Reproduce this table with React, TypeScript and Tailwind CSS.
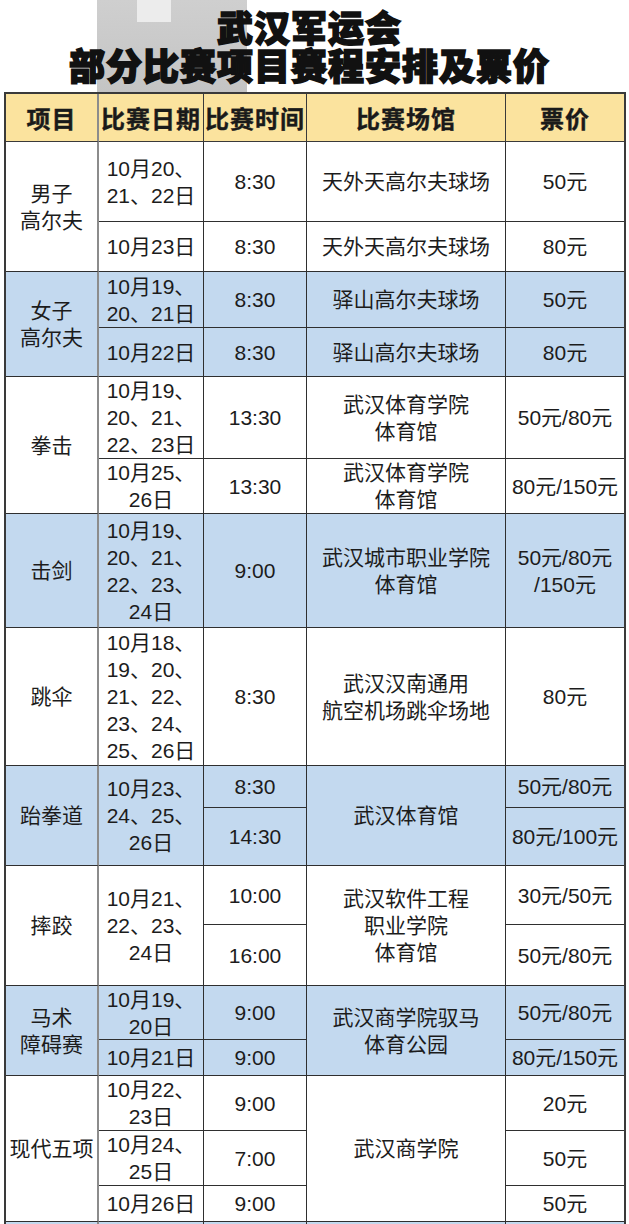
import React from 'react';

type Cell = {
  row: string;
  col: string;
  lines: string[];
  blue?: boolean;
  first?: boolean;
  last?: boolean;
};

const BLUE = 'bg-[#c3d9ef]';

// row index helpers: header is row 1, body rows start at 2
const cells: Cell[] = [
  // 男子高尔夫
  { row: 'row-[2/4]', col: 'col-[1]', lines: ['男子', '高尔夫'], first: true },
  { row: 'row-[2]', col: 'col-[2]', lines: ['10月20、', '21、22日'] },
  { row: 'row-[2]', col: 'col-[3]', lines: ['8:30'] },
  { row: 'row-[2]', col: 'col-[4]', lines: ['天外天高尔夫球场'] },
  { row: 'row-[2]', col: 'col-[5]', lines: ['50元'], last: true },
  { row: 'row-[3]', col: 'col-[2]', lines: ['10月23日'] },
  { row: 'row-[3]', col: 'col-[3]', lines: ['8:30'] },
  { row: 'row-[3]', col: 'col-[4]', lines: ['天外天高尔夫球场'] },
  { row: 'row-[3]', col: 'col-[5]', lines: ['80元'], last: true },

  // 女子高尔夫
  { row: 'row-[4/6]', col: 'col-[1]', lines: ['女子', '高尔夫'], first: true, blue: true },
  { row: 'row-[4]', col: 'col-[2]', lines: ['10月19、', '20、21日'], blue: true },
  { row: 'row-[4]', col: 'col-[3]', lines: ['8:30'], blue: true },
  { row: 'row-[4]', col: 'col-[4]', lines: ['驿山高尔夫球场'], blue: true },
  { row: 'row-[4]', col: 'col-[5]', lines: ['50元'], blue: true, last: true },
  { row: 'row-[5]', col: 'col-[2]', lines: ['10月22日'], blue: true },
  { row: 'row-[5]', col: 'col-[3]', lines: ['8:30'], blue: true },
  { row: 'row-[5]', col: 'col-[4]', lines: ['驿山高尔夫球场'], blue: true },
  { row: 'row-[5]', col: 'col-[5]', lines: ['80元'], blue: true, last: true },

  // 拳击
  { row: 'row-[6/8]', col: 'col-[1]', lines: ['拳击'], first: true },
  { row: 'row-[6]', col: 'col-[2]', lines: ['10月19、', '20、21、', '22、23日'] },
  { row: 'row-[6]', col: 'col-[3]', lines: ['13:30'] },
  { row: 'row-[6]', col: 'col-[4]', lines: ['武汉体育学院', '体育馆'] },
  { row: 'row-[6]', col: 'col-[5]', lines: ['50元/80元'], last: true },
  { row: 'row-[7]', col: 'col-[2]', lines: ['10月25、', '26日'] },
  { row: 'row-[7]', col: 'col-[3]', lines: ['13:30'] },
  { row: 'row-[7]', col: 'col-[4]', lines: ['武汉体育学院', '体育馆'] },
  { row: 'row-[7]', col: 'col-[5]', lines: ['80元/150元'], last: true },

  // 击剑
  { row: 'row-[8]', col: 'col-[1]', lines: ['击剑'], first: true, blue: true },
  { row: 'row-[8]', col: 'col-[2]', lines: ['10月19、', '20、21、', '22、23、', '24日'], blue: true },
  { row: 'row-[8]', col: 'col-[3]', lines: ['9:00'], blue: true },
  { row: 'row-[8]', col: 'col-[4]', lines: ['武汉城市职业学院', '体育馆'], blue: true },
  { row: 'row-[8]', col: 'col-[5]', lines: ['50元/80元', '/150元'], blue: true, last: true },

  // 跳伞
  { row: 'row-[9]', col: 'col-[1]', lines: ['跳伞'], first: true },
  { row: 'row-[9]', col: 'col-[2]', lines: ['10月18、', '19、20、', '21、22、', '23、24、', '25、26日'] },
  { row: 'row-[9]', col: 'col-[3]', lines: ['8:30'] },
  { row: 'row-[9]', col: 'col-[4]', lines: ['武汉汉南通用', '航空机场跳伞场地'] },
  { row: 'row-[9]', col: 'col-[5]', lines: ['80元'], last: true },

  // 跆拳道
  { row: 'row-[10/12]', col: 'col-[1]', lines: ['跆拳道'], first: true, blue: true },
  { row: 'row-[10/12]', col: 'col-[2]', lines: ['10月23、', '24、25、', '26日'], blue: true },
  { row: 'row-[10]', col: 'col-[3]', lines: ['8:30'], blue: true },
  { row: 'row-[11]', col: 'col-[3]', lines: ['14:30'], blue: true },
  { row: 'row-[10/12]', col: 'col-[4]', lines: ['武汉体育馆'], blue: true },
  { row: 'row-[10]', col: 'col-[5]', lines: ['50元/80元'], blue: true, last: true },
  { row: 'row-[11]', col: 'col-[5]', lines: ['80元/100元'], blue: true, last: true },

  // 摔跤
  { row: 'row-[12/14]', col: 'col-[1]', lines: ['摔跤'], first: true },
  { row: 'row-[12/14]', col: 'col-[2]', lines: ['10月21、', '22、23、', '24日'] },
  { row: 'row-[12]', col: 'col-[3]', lines: ['10:00'] },
  { row: 'row-[13]', col: 'col-[3]', lines: ['16:00'] },
  { row: 'row-[12/14]', col: 'col-[4]', lines: ['武汉软件工程', '职业学院', '体育馆'] },
  { row: 'row-[12]', col: 'col-[5]', lines: ['30元/50元'], last: true },
  { row: 'row-[13]', col: 'col-[5]', lines: ['50元/80元'], last: true },

  // 马术障碍赛
  { row: 'row-[14/16]', col: 'col-[1]', lines: ['马术', '障碍赛'], first: true, blue: true },
  { row: 'row-[14]', col: 'col-[2]', lines: ['10月19、', '20日'], blue: true },
  { row: 'row-[15]', col: 'col-[2]', lines: ['10月21日'], blue: true },
  { row: 'row-[14]', col: 'col-[3]', lines: ['9:00'], blue: true },
  { row: 'row-[15]', col: 'col-[3]', lines: ['9:00'], blue: true },
  { row: 'row-[14/16]', col: 'col-[4]', lines: ['武汉商学院驭马', '体育公园'], blue: true },
  { row: 'row-[14]', col: 'col-[5]', lines: ['50元/80元'], blue: true, last: true },
  { row: 'row-[15]', col: 'col-[5]', lines: ['80元/150元'], blue: true, last: true },

  // 现代五项
  { row: 'row-[16/19]', col: 'col-[1]', lines: ['现代五项'], first: true },
  { row: 'row-[16]', col: 'col-[2]', lines: ['10月22、', '23日'] },
  { row: 'row-[17]', col: 'col-[2]', lines: ['10月24、', '25日'] },
  { row: 'row-[18]', col: 'col-[2]', lines: ['10月26日'] },
  { row: 'row-[16]', col: 'col-[3]', lines: ['9:00'] },
  { row: 'row-[17]', col: 'col-[3]', lines: ['7:00'] },
  { row: 'row-[18]', col: 'col-[3]', lines: ['9:00'] },
  { row: 'row-[16/19]', col: 'col-[4]', lines: ['武汉商学院'] },
  { row: 'row-[16]', col: 'col-[5]', lines: ['20元'], last: true },
  { row: 'row-[17]', col: 'col-[5]', lines: ['50元'], last: true },
  { row: 'row-[18]', col: 'col-[5]', lines: ['50元'], last: true },

  // next row, cut off by the bottom edge
  { row: 'row-[19]', col: 'col-[1]', lines: [], first: true, blue: true },
  { row: 'row-[19]', col: 'col-[2]', lines: [], blue: true },
  { row: 'row-[19]', col: 'col-[3]', lines: [], blue: true },
  { row: 'row-[19]', col: 'col-[4]', lines: [], blue: true },
  { row: 'row-[19]', col: 'col-[5]', lines: [], blue: true, last: true },
];

const headers = ['项目', '比赛日期', '比赛时间', '比赛场馆', '票价'];

function BodyCell({ cell }: { cell: Cell }) {
  const border = cell.first
    ? 'border-r-2 border-r-[#8c8c8c]'
    : cell.last
    ? ''
    : 'border-r border-r-[#2f2f2f]';
  return (
    <div
      className={`${cell.row} ${cell.col} ${cell.blue ? BLUE : 'bg-white'} ${border} border-b border-b-[#2f2f2f] flex flex-col items-center justify-center text-center text-[21px] leading-[27px] text-[#1c1c1c]`}
    >
      {cell.lines.map((l, i) => (
        <span key={i} className="whitespace-nowrap">
          {l}
        </span>
      ))}
    </div>
  );
}

export default function App() {
  return (
    <div
      className="relative h-[1224px] w-[629px] overflow-hidden bg-white"
      style={{ fontFamily: '"Liberation Sans", "Noto Sans CJK SC", sans-serif' }}
    >
      {/* grey photo block behind the title */}
      <div className="absolute left-[97px] top-0 h-[92px] w-[150px] bg-gradient-to-b from-[#cfcfcf] to-[#c4c4c4]">
        <div className="ml-[40px] h-[22px] w-[34px] bg-[#ececec]" />
      </div>

      <div
        className="relative flex flex-col items-center pt-[7px] pr-[10px] text-[36px] font-black leading-[38px] text-[#111] [-webkit-text-stroke:1.6px_#111]"
        style={{ fontFamily: '"Noto Sans CJK SC", sans-serif' }}
      >
        <div className="tracking-[1px]">武汉军运会</div>
        <div className="tracking-[1px]">部分比赛项目赛程安排及票价</div>
      </div>

      <div className="relative ml-[4px] mt-[9px] grid w-[622px] grid-cols-[93px_105px_103px_199px_118px] grid-rows-[48px_80px_50px_56px_49px_82px_55px_114px_138px_42px_58px_59px_61px_54px_36px_55px_55px_36px_40px] border-x-2 border-t-2 border-[#3a3a3a]">
        {headers.map((h, i) => (
          <div
            key={h}
            className={`row-[1] flex items-center justify-center bg-[#fbe39e] border-b border-b-[#3a3a3a] ${
              i === 0
                ? 'border-r-2 border-r-[#8c8c8c]'
                : i < 4
                ? 'border-r border-r-[#3a3a3a]'
                : ''
            } text-[24px] font-bold tracking-[1px] text-[#1a1a1a] whitespace-nowrap [-webkit-text-stroke:0.4px_#1a1a1a]`}
            style={{ fontFamily: '"Noto Sans CJK SC", sans-serif' }}
          >
            {h}
          </div>
        ))}
        {cells.map((c, i) => (
          <BodyCell key={i} cell={c} />
        ))}
      </div>
    </div>
  );
}
